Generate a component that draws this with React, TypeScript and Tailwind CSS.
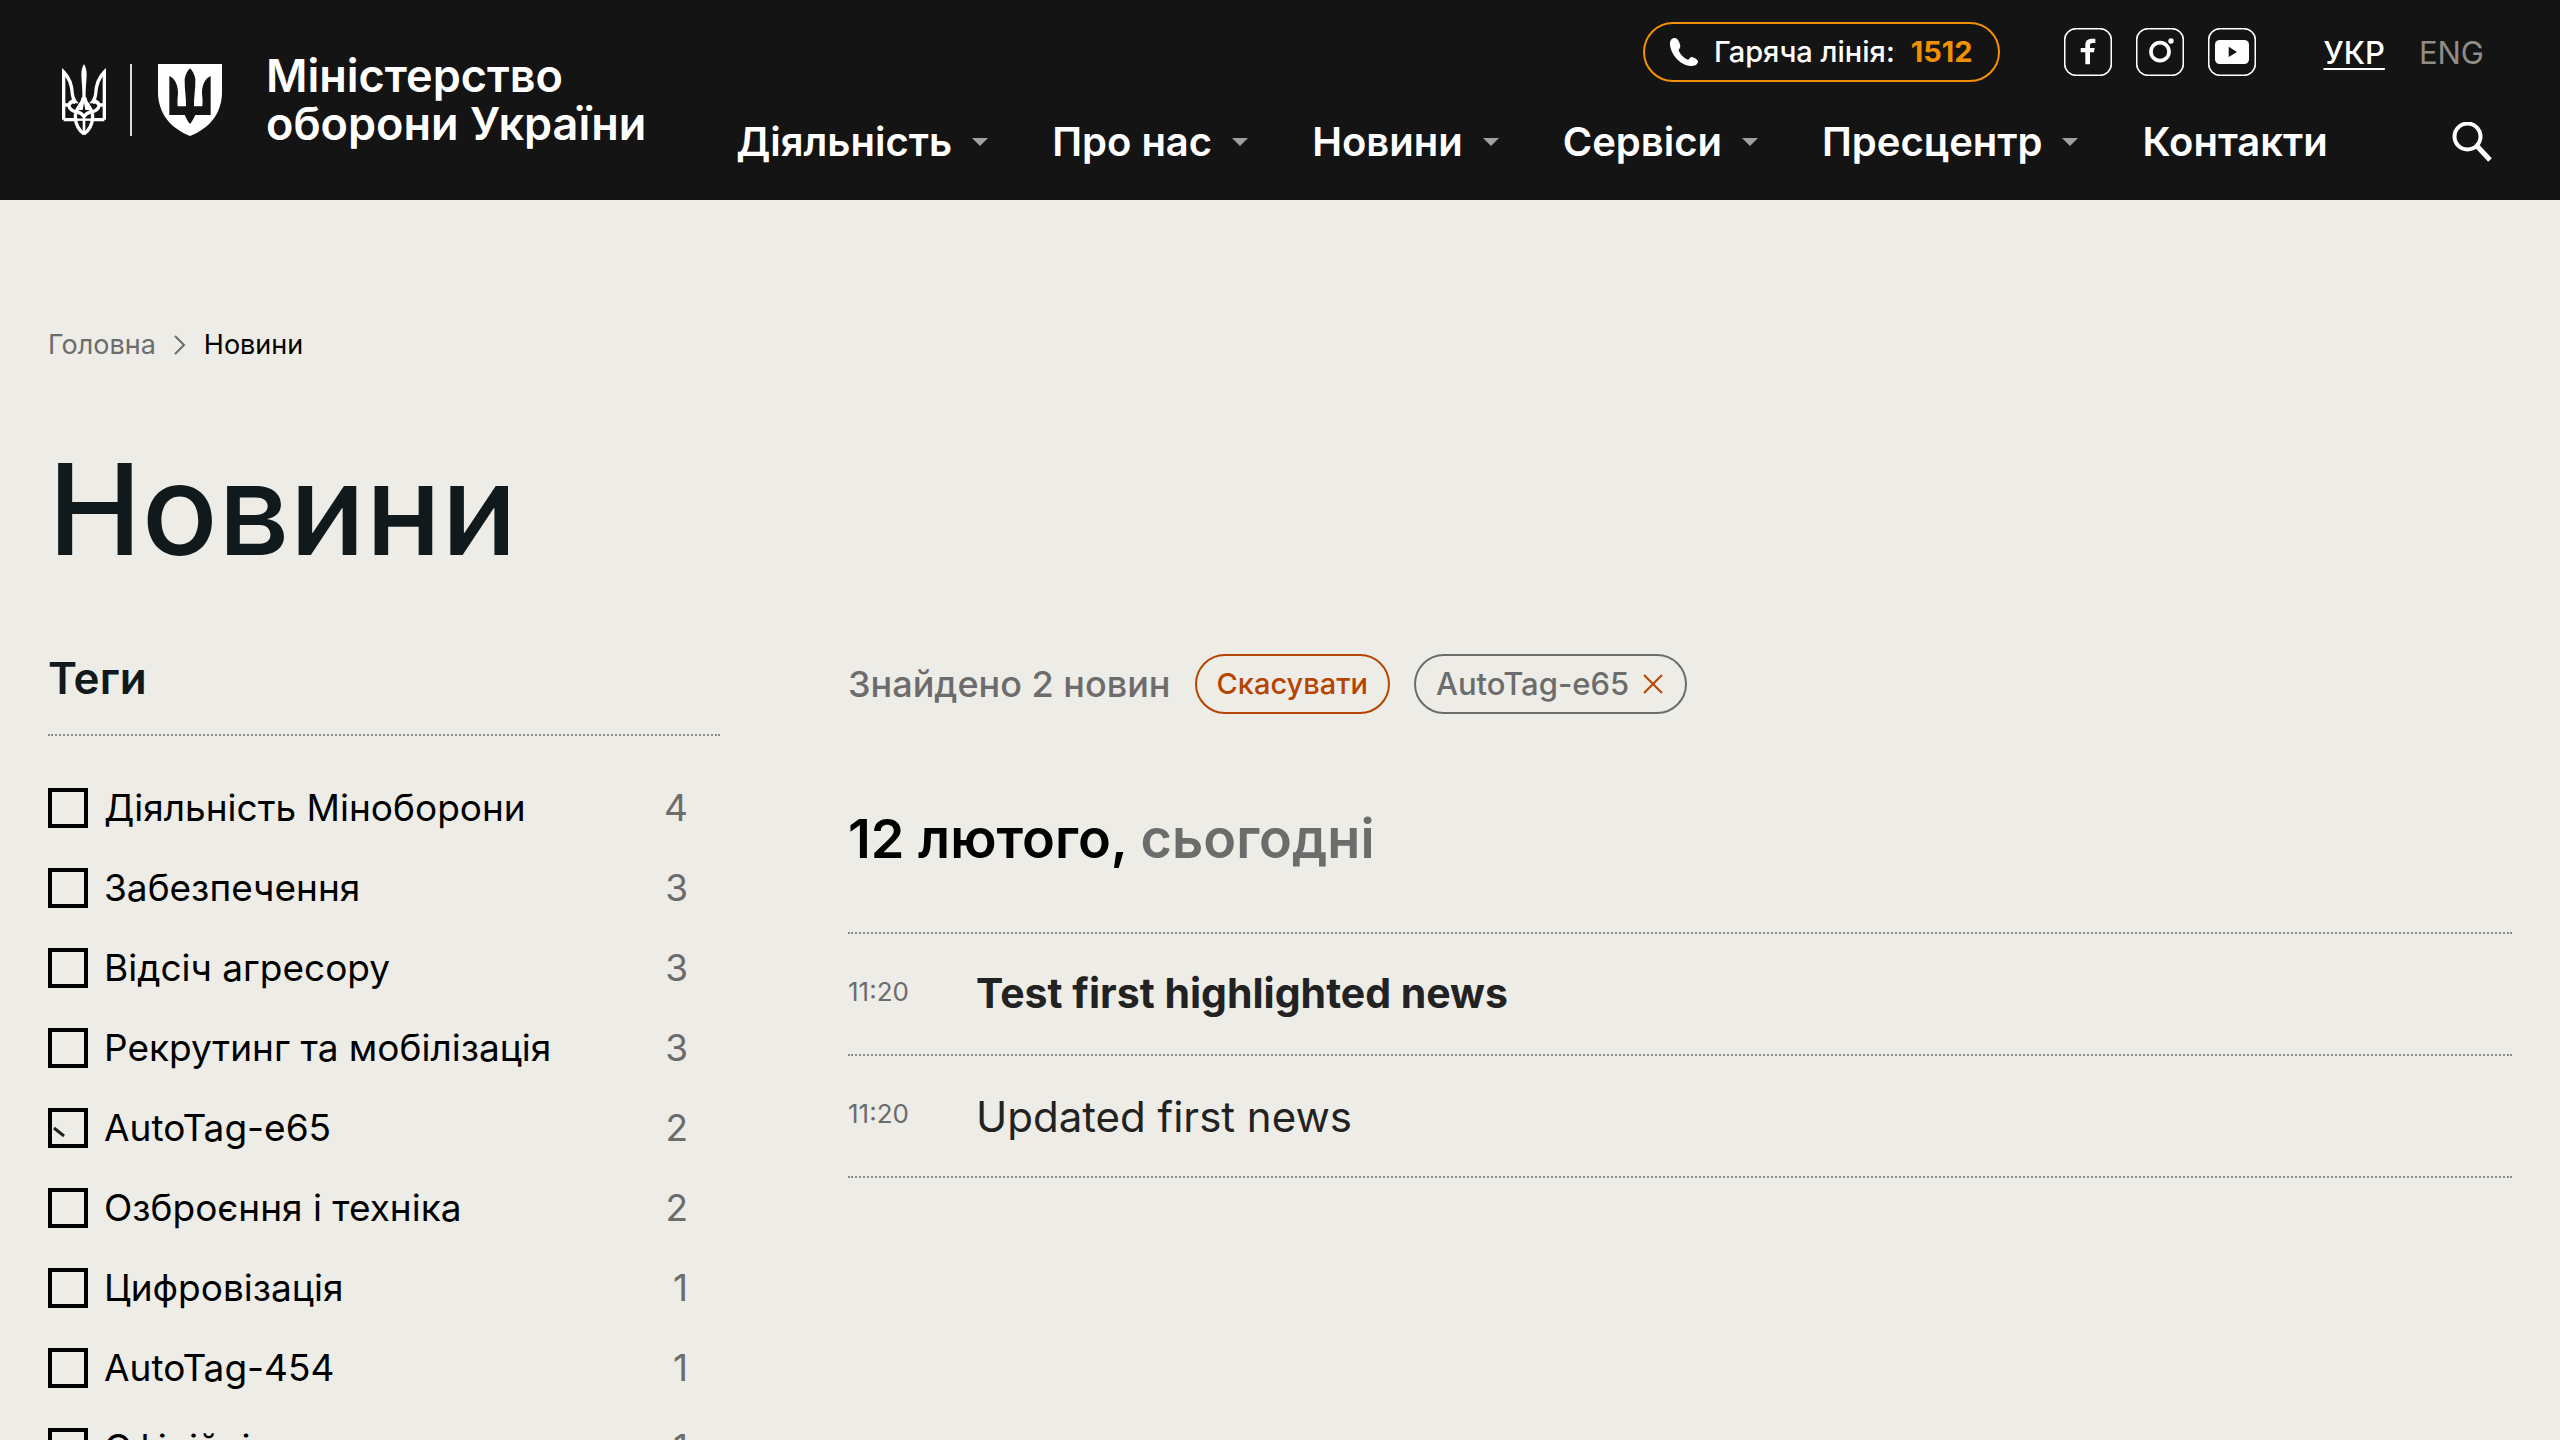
const navItems = [
  { label: "Діяльність", menu: true },
  { label: "Про нас", menu: true },
  { label: "Новини", menu: true },
  { label: "Сервіси", menu: true },
  { label: "Пресцентр", menu: true },
  { label: "Контакти", menu: false },
];

const tags = [
  { name: "Діяльність Міноборони", count: 4, checked: false },
  { name: "Забезпечення", count: 3, checked: false },
  { name: "Відсіч агресору", count: 3, checked: false },
  { name: "Рекрутинг та мобілізація", count: 3, checked: false },
  { name: "AutoTag-e65", count: 2, checked: true },
  { name: "Озброєння і техніка", count: 2, checked: false },
  { name: "Цифровізація", count: 1, checked: false },
  { name: "AutoTag-454", count: 1, checked: false },
  { name: "Офіційні", count: 1, checked: false },
];

const news = [
  { time: "11:20", title: "Test first highlighted news", highlighted: true },
  { time: "11:20", title: "Updated first news", highlighted: false },
];

function TridentLogo() {
  const half = (
    <>
      <path d="M5 167V24C21 40 30 64 31 90C32 100 34 106 39 112C30 111 23 116 20 124C23 138 34 142 46 144" />
      <path d="M5 123H20M5 167H42" />
      <path d="M64 100C62 122 40 130 40 158C41 182 52 200 66 210" />
      <path d="M20 124C30 108 36 112 40 118M46 144C56 146 62 152 66 158" />
    </>
  );
  return (
    <svg viewBox="0 0 132 216" className="h-[72px] w-11 shrink-0" fill="none" aria-hidden="true">
      <g stroke="#fff" strokeWidth="10" strokeLinejoin="miter">
        {half}
        <g transform="matrix(-1 0 0 1 132 0)">{half}</g>
        <path d="M66 156V212" strokeWidth="8" />
        <path d="M42 167H90" strokeWidth="7" />
      </g>
      <path
        fill="#fff"
        d="M66 0C71 8 74 18 74 32C73 58 70 78 71 104C72 120 78 128 84 138H70L66 116L62 138H48C54 128 60 120 61 104C62 78 59 58 58 32C58 18 61 8 66 0Z"
      />
    </svg>
  );
}

function ShieldLogo() {
  return (
    <svg viewBox="0 0 192 216" className="h-[72px] w-16 shrink-0" aria-hidden="true">
      <path fill="#fff" d="M0 0H192V84C192 150 152 194 96 216C40 194 0 150 0 84Z" />
      <path
        fill="#141414"
        d="M34 36C52 44 61 66 60 90C58 105 58 115 59 127H84C85 100 79 75 80 45C82 32 89 20 96 13C103 20 110 32 112 45C113 75 107 100 108 127H133C134 115 134 105 132 90C131 66 140 44 158 36V153H112C108 160 104 172 96 180C88 172 84 160 80 153H34Z"
      />
    </svg>
  );
}

function PhoneIcon() {
  return (
    <svg viewBox="0 0 84 84" className="size-7 shrink-0" fill="#fff" aria-hidden="true">
      <path d="M14 0C5 0 0 7 0 17C0 47 31 84 66 84C77 84 84 78 84 70C81 63 74 59 66 57C61 56 59 63 55 65C47 64 32 51 26 38C26 33 31 30 31 25C29 12 24 1 14 0Z" />
    </svg>
  );
}

function SocialFrame({ label, children }: { label: string; children: React.ReactNode }) {
  return (
    <a href="#" aria-label={label} className="block">
      <svg viewBox="0 0 144 144" className="size-12" fill="none" aria-hidden="true">
        <rect x="2" y="2" width="140" height="140" rx="34" stroke="#fff" strokeWidth="5" />
        {children}
      </svg>
    </a>
  );
}

function SearchIcon() {
  return (
    <svg viewBox="0 0 40 40" className="size-10" fill="none" stroke="#fff" aria-hidden="true">
      <circle cx="15.5" cy="14.5" r="13" strokeWidth="4" />
      <path d="M24.5 23.5L38 38" strokeWidth="5" />
    </svg>
  );
}

function Header() {
  return (
    <header className="flex items-center bg-[#141414] pl-[62px] text-white">
      <a href="#" className="flex shrink-0 items-center">
        <TridentLogo />
        <span className="ml-6 h-[72px] w-0.5 bg-[#d9d9e3]" />
        <span className="ml-[26px]">
          <ShieldLogo />
        </span>
        <span className="ml-11 text-[45px] leading-[48px] font-semibold whitespace-nowrap">
          Міністерство
          <br />
          оборони України
        </span>
      </a>

      <div className="ml-[90px] flex flex-1 flex-col gap-9 pt-[22px] pr-[68px] pb-[34px]">
        <div className="flex items-center justify-end pr-2">
          <a
            href="tel:1512"
            className="flex h-[60px] items-center rounded-full border-2 border-[#f29100] px-[25px] text-[29px] whitespace-nowrap"
          >
            <PhoneIcon />
            <span className="ml-4 font-medium">Гаряча лінія:</span>
            <span className="ml-4 font-bold text-[#f29100]">1512</span>
          </a>
          <div className="ml-16 flex gap-6">
            <SocialFrame label="Facebook">
              <path fill="#fff" d="M64 109V73H50V60H64V50C64 38 72 32 84 32H94V45H86C80 45 78 48 78 53V60H92L90 73H78V109Z" />
            </SocialFrame>
            <SocialFrame label="Instagram">
              <circle cx="72" cy="71" r="27" stroke="#fff" strokeWidth="11" />
              <circle cx="105" cy="39" r="8" fill="#fff" />
            </SocialFrame>
            <SocialFrame label="YouTube">
              <rect x="21" y="36" width="102" height="72" rx="14" fill="#fff" />
              <path d="M62 56L87 72L62 87Z" fill="#141414" />
            </SocialFrame>
          </div>
          <div className="ml-[68px] flex gap-[34px] pt-0.5 text-[31px] leading-10">
            <a href="#" className="font-medium underline decoration-2 underline-offset-4">УКР</a>
            <a href="#" className="text-[#8f8d86]">ENG</a>
          </div>
        </div>

        <div className="flex h-12 items-center justify-between">
          <nav className="flex items-center gap-16">
            {navItems.map((item) => (
              <a key={item.label} href="#" className="flex items-center gap-5 text-[40px] leading-[48px] font-semibold whitespace-nowrap">
                {item.label}
                {item.menu && (
                  <svg viewBox="0 0 16 8" className="h-2 w-4" fill="#a0a0a0" aria-hidden="true">
                    <path d="M0 0H16L8 8Z" />
                  </svg>
                )}
              </a>
            ))}
          </nav>
          <button type="button" aria-label="Пошук">
            <SearchIcon />
          </button>
        </div>
      </div>
    </header>
  );
}

function TagFilter() {
  return (
    <aside>
      <h2 className="border-b-2 border-dotted border-[#8a8a88] pb-8 text-[44px] leading-[48px] font-semibold text-[#10191c]">
        Теги
      </h2>
      <ul className="mt-[52px] flex flex-col gap-10 pr-8">
        {tags.map((tag) => (
          <li key={tag.name} className="flex h-10 items-center justify-between text-[37px] leading-10">
            <label className="flex items-center gap-4">
              <span className="relative block size-10">
                <input
                  type="checkbox"
                  defaultChecked={tag.checked}
                  className="peer block size-10 appearance-none border-4 border-black"
                />
                <svg
                  viewBox="0 0 40 40"
                  className="pointer-events-none absolute inset-0 hidden peer-checked:block"
                  fill="none"
                  aria-hidden="true"
                >
                  <path d="M6 20L16 28" stroke="#222" strokeWidth="3" />
                </svg>
              </span>
              {tag.name}
            </label>
            <span className="text-[#6c6c6c]">{tag.count}</span>
          </li>
        ))}
      </ul>
    </aside>
  );
}

function NewsList() {
  return (
    <section>
      <div className="flex items-center gap-6 font-medium text-[#6c6c6c]">
        <p className="text-[36px] leading-[60px]">Знайдено 2 новин</p>
        <button type="button" className="h-[60px] rounded-full border-2 border-[#b54500] px-5 text-[29px] text-[#b54500]">
          Скасувати
        </button>
        <button type="button" className="flex h-[60px] items-center gap-3 rounded-full border-2 border-[#6c6c6c] px-5 text-[31px]">
          AutoTag-e65
          <svg viewBox="0 0 24 24" className="size-6" fill="none" stroke="#b54500" strokeWidth="2" aria-hidden="true">
            <path d="M3 3L21 21M21 3L3 21" />
          </svg>
        </button>
      </div>
      <h2 className="mt-[93px] text-[54px] leading-16 font-semibold text-black">
        12 лютого, <span className="text-[#6c6c6c]">сьогодні</span>
      </h2>
      <ul className="mt-[61px] border-t-2 border-dotted border-[#8a8a88]">
        {news.map((item) => (
          <li key={item.title} className="flex h-[122px] items-center border-b-2 border-dotted border-[#8a8a88]">
            <time className="w-32 pb-1.5 text-[26px] text-[#6c6c6c]">{item.time}</time>
            <a href="#" className={item.highlighted ? "text-[41px] font-bold text-[#222]" : "text-[42px] text-[#222]"}>
              {item.title}
            </a>
          </li>
        ))}
      </ul>
    </section>
  );
}

export default function App() {
  return (
    <div className="min-h-screen bg-[#edece6] font-['Inter',sans-serif] text-black">
      <Header />
      <main className="px-12 pt-[129px] pb-20">
        <nav className="flex items-center gap-[18px] text-[27px] leading-8">
          <a href="#" className="text-[#6c6c6c]">Головна</a>
          <svg viewBox="0 0 12 20" className="h-5 w-3" fill="none" stroke="#6c6c6c" strokeWidth="2" aria-hidden="true">
            <path d="M1 1L10 10L1 19" />
          </svg>
          <span>Новини</span>
        </nav>
        <h1 className="mt-20 text-[126px] leading-[136px] font-medium text-[#10191c]">Новини</h1>
        <div className="mt-[77px] grid grid-cols-[672fr_1664fr] gap-32">
          <TagFilter />
          <NewsList />
        </div>
      </main>
    </div>
  );
}
